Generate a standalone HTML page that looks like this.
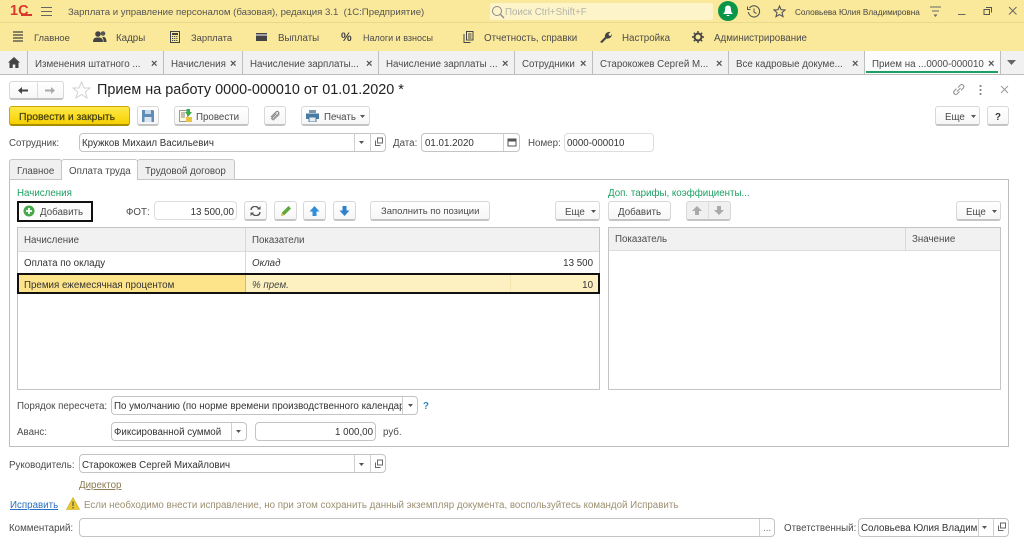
<!DOCTYPE html>
<html lang="ru"><head><meta charset="utf-8"><title>Прием на работу</title>
<style>
html,body{margin:0;padding:0;background:#fff}
#p{position:relative;width:1024px;height:545px;overflow:hidden;background:#fff;font:9.75px/14px "Liberation Sans",Arial,sans-serif;color:#4b4b4b;filter:blur(.3px)}
#p div,#p span,#p svg{position:absolute}
.t{white-space:nowrap;height:14px;margin-top:4px}
.b{box-sizing:border-box;background:linear-gradient(#fff,#f6f6f6);border:1px solid #d8d8d8;border-bottom:2px solid #c4c4c4;border-radius:3px}
.i{box-sizing:border-box;background:#fff;border:1px solid #c4c4c4;border-radius:4px}
.d{width:1px;background:#cfcfcf}
.x{font-size:11px;font-weight:bold;color:#555}
.g{color:#1c9f62}
</style></head><body><div id="p">

<!-- top bar -->
<div style="left:0;top:0;width:1024px;height:22px;background:#fbe99b"></div>
<div style="left:0;top:22px;width:1024px;height:1px;background:#e9d98c"></div>
<div style="left:0;top:23px;width:1024px;height:28px;background:#fbe99b"></div>
<span class="t" style="left:10px;top:-1px;font:bold 14.5px/16px 'Liberation Sans',sans-serif;color:#d9382c">1С</span>
<div style="left:21px;top:14px;width:11px;height:2px;background:#d9382c"></div>
<svg style="left:41px;top:6px" width="12" height="11"><path d="M0 1.5H11M0 5.5H11M0 9.5H11" stroke="#666" stroke-width="1"/></svg>
<span class="t" style="left:68px;top:2px;font-size:9.62px;color:#555">Зарплата и управление персоналом (базовая), редакция 3.1&nbsp; (1С:Предприятие)</span>
<div style="left:490px;top:3px;width:223px;height:17px;background:#fdf5c9;border-radius:2px"></div>
<svg style="left:491px;top:5px" width="14" height="14"><circle cx="6" cy="6" r="4.5" fill="none" stroke="#888" stroke-width="1"/><path d="M9.5 9.5L13 13" stroke="#888" stroke-width="1.3"/></svg>
<span class="t" style="left:505px;top:2px;color:#b3b3a8">Поиск Ctrl+Shift+F</span>
<div style="left:718px;top:1px;width:20px;height:20px;border-radius:50%;background:#0b9548"></div>
<svg style="left:722px;top:5px" width="12" height="12"><path d="M6 0.5C3.5 0.5 3 2.5 3 4.5C3 6.5 2.5 7.5 1 9H11C9.5 7.5 9 6.5 9 4.5C9 2.5 8.5 0.5 6 0.5ZM4.5 10H7.5C7.5 11.5 4.5 11.5 4.5 10Z" fill="#fff"/></svg>
<svg style="left:747px;top:5px" width="14" height="14"><path d="M2.5 3A5.6 5.6 0 1 1 1.4 7" fill="none" stroke="#555" stroke-width="1.1"/><path d="M0.5 1.5V4.5H3.5" fill="none" stroke="#555" stroke-width="1"/><path d="M7 3.5V7.2L9.5 8.5" fill="none" stroke="#555" stroke-width="1"/></svg>
<svg style="left:773px;top:5px" width="13" height="13"><path d="M6.5 1L8 4.7L12 5L9 7.6L10 11.6L6.5 9.5L3 11.6L4 7.6L1 5L5 4.7Z" fill="none" stroke="#555" stroke-width="1.1"/></svg>
<span class="t" style="left:795px;top:2px;font-size:8.2px;color:#444">Соловьева Юлия Владимировна</span>
<svg style="left:930px;top:6px" width="12" height="12"><path d="M0 1H11M2 5H9" stroke="#666"/><path d="M3.5 8.5H7.5L5.5 11Z" fill="#666"/></svg>
<svg style="left:957px;top:6px" width="10" height="10"><path d="M1 8.5H8.5" stroke="#666"/></svg>
<svg style="left:983px;top:6px" width="10" height="10"><path d="M3 1.5H8.5V6.5M1 3.5H6.5V8.5H1Z" fill="none" stroke="#555"/></svg>
<svg style="left:1008px;top:6px" width="10" height="10"><path d="M1 1L8.5 8.5M8.5 1L1 8.5" stroke="#666"/></svg>

<!-- menu -->
<svg style="left:13px;top:31px" width="11" height="12"><path d="M0 1H10M0 4H10M0 7H10M0 10H10" stroke="#444" stroke-width="1.2"/></svg>
<span class="t" style="left:34px;top:27px;font-size:9.4px">Главное</span>
<svg style="left:93px;top:30px" width="14" height="13"><circle cx="5" cy="4" r="2.8" fill="#444"/><circle cx="10" cy="3.5" r="2.3" fill="#555"/><path d="M0 12C0 8 2 7.5 5 7.5S10 8 10 12ZM10.500 12C10.500 9 10 8 9 7C12 6.500 13.500 8 13.500 12Z" fill="#444"/></svg>
<span class="t" style="left:116px;top:28px">Кадры</span>
<svg style="left:170px;top:31px" width="10" height="12"><path d="M.5.5H9.500V11.500H.5Z" fill="none" stroke="#444"/><path d="M2 2H8V4H2Z" fill="#444"/><path d="M2 5.500H8M2 7.500H8M2 9.500H8" stroke="#444" stroke-dasharray="1.200 .9"/></svg>
<span class="t" style="left:191px;top:27px;font-size:9.4px">Зарплата</span>
<svg style="left:256px;top:33px" width="12" height="9"><path d="M0 0H11V8H0Z" fill="#444"/><path d="M0 2H11" stroke="#ddd" stroke-width="1.200"/></svg>
<span class="t" style="left:278px;top:28px">Выплаты</span>
<span class="t" style="left:341px;top:26px;font-size:12px;font-weight:bold;color:#444">%</span>
<span class="t" style="left:363px;top:27px;font-size:9px">Налоги и взносы</span>
<svg style="left:463px;top:31px" width="11" height="12"><path d="M3.500 .5H10V9H3.500ZM1 3V11.500H7.500" fill="none" stroke="#444"/><path d="M5 3H8.500M5 5H8.500M5 7H8.500" stroke="#444"/></svg>
<span class="t" style="left:484px;top:28px">Отчетность, справки</span>
<svg style="left:599px;top:31px" width="13" height="12"><path d="M1 11L6 6C5.500 3 8 .5 11.500 1L9.500 3L10 4.500L11.500 5L13 3C13 6.500 10 8 7.500 7.500L3 12Z" fill="#444"/></svg>
<span class="t" style="left:622px;top:28px">Настройка</span>
<svg style="left:692px;top:31px" width="12" height="12"><circle cx="6" cy="6" r="3.500" fill="none" stroke="#444" stroke-width="2"/><path d="M6 0V12M0 6H12M1.800 1.800L10.200 10.200M10.200 1.800L1.800 10.200" stroke="#444" stroke-width="1.400" stroke-dasharray="2 8"/></svg>
<span class="t" style="left:714px;top:28px">Администрирование</span>

<!-- tabs -->
<div style="left:0;top:51px;width:1024px;height:23px;background:#f1f1f1"></div>
<div style="left:865px;top:51px;width:135px;height:23px;background:#fbfbfb"></div>
<div style="left:0;top:74px;width:1024px;height:1px;background:#bcbcbc"></div>
<svg style="left:8px;top:57px" width="12" height="11"><path d="M6 0L12 5.500H10.500V11H7.300V7.500H4.700V11H1.500V5.500H0Z" fill="#444"/></svg>
<div class="d" style="left:27px;top:51px;height:23px;background:#bdbdbd"></div>
<div class="d" style="left:163px;top:51px;height:23px;background:#bdbdbd"></div>
<div class="d" style="left:242px;top:51px;height:23px;background:#bdbdbd"></div>
<div class="d" style="left:378px;top:51px;height:23px;background:#bdbdbd"></div>
<div class="d" style="left:514px;top:51px;height:23px;background:#bdbdbd"></div>
<div class="d" style="left:592px;top:51px;height:23px;background:#bdbdbd"></div>
<div class="d" style="left:728px;top:51px;height:23px;background:#bdbdbd"></div>
<div class="d" style="left:864px;top:51px;height:23px;background:#bdbdbd"></div>
<div class="d" style="left:1000px;top:51px;height:23px;background:#bdbdbd"></div>
<span class="t" style="left:35px;top:54px">Изменения штатного ...</span><span class="t x" style="left:151px;top:53px">×</span>
<span class="t" style="left:171px;top:54px">Начисления</span><span class="t x" style="left:230px;top:53px">×</span>
<span class="t" style="left:250px;top:54px">Начисление зарплаты...</span><span class="t x" style="left:366px;top:53px">×</span>
<span class="t" style="left:386px;top:54px">Начисление зарплаты ...</span><span class="t x" style="left:502px;top:53px">×</span>
<span class="t" style="left:522px;top:54px">Сотрудники</span><span class="t x" style="left:580px;top:53px">×</span>
<span class="t" style="left:600px;top:54px">Старокожев Сергей М...</span><span class="t x" style="left:716px;top:53px">×</span>
<span class="t" style="left:736px;top:54px">Все кадровые докуме...</span><span class="t x" style="left:852px;top:53px">×</span>
<span class="t" style="left:872px;top:54px">Прием на ...0000-000010</span><span class="t x" style="left:988px;top:53px">×</span>
<div style="left:866px;top:71px;width:132px;height:2px;background:#1c9f62"></div>
<svg style="left:1007px;top:60px" width="10" height="6"><path d="M0 0H9L4.500 5Z" fill="#666"/></svg>

<!-- title row -->
<div class="b" style="left:9px;top:81px;width:55px;height:19px"></div>
<div class="d" style="left:37px;top:82px;height:16px;background:#ddd"></div>
<svg style="left:18px;top:86px" width="11" height="9"><path d="M0 4.500L4 1V3.500H10V5.500H4V8Z" fill="#444"/></svg>
<svg style="left:45px;top:86px" width="11" height="9"><path d="M10 4.500L6 1V3.500H0V5.500H6V8Z" fill="#aaa"/></svg>
<svg style="left:72px;top:81px" width="19" height="18"><path d="M9.500 1L12 7H18L13.300 11L15 17L9.500 13.500L4 17L5.700 11L1 7H7Z" fill="#fff" stroke="#d2d2d2"/></svg>
<span class="t" style="left:97px;top:77px;height:18px;font-size:14.4px;line-height:18px;color:#222">Прием на работу 0000-000010 от 01.01.2020 *</span>
<svg style="left:952px;top:83px" width="14" height="13"><path d="M6 4.500L8.500 2C10 .5 13 3 11.500 4.800L9 7.300M7.500 8.500L5 11C3.500 12.500 .5 10 2 8.200L4.500 5.700M5 8.500L8.500 5" fill="none" stroke="#999" stroke-width="1.100"/></svg>
<svg style="left:979px;top:84px" width="4" height="12"><path d="M1.500 1V3M1.500 5V7M1.500 9V11" stroke="#888" stroke-width="1.800"/></svg>
<svg style="left:1000px;top:85px" width="9" height="9"><path d="M1 1L8 8M8 1L1 8" stroke="#999"/></svg>

<!-- toolbar -->
<div style="box-sizing:border-box;left:9px;top:106px;width:121px;height:20px;border-radius:3px;border:1px solid #c9a900;border-bottom:2px solid #a98f00;background:linear-gradient(#ffe94a,#f6d000)"></div>
<span class="t" style="left:19px;top:107px;color:#44400f;font-size:10.4px;font-weight:normal;-webkit-text-stroke:.2px #44400f">Провести и закрыть</span>
<div class="b" style="left:137px;top:106px;width:22px;height:20px"></div>
<svg style="left:142px;top:110px" width="12" height="12"><path d="M0 0H11L12 1V12H0Z" fill="#5f8db8"/><path d="M3 0H9V4H3Z" fill="#c8d8e6"/><path d="M2.500 7H9.500V12H2.500Z" fill="#dde6ee"/></svg>
<div class="b" style="left:174px;top:106px;width:75px;height:20px"></div>
<svg style="left:179px;top:109px" width="14" height="14"><path d="M.5 1.500H8.500V12.500H.5Z" fill="#fdf8e3" stroke="#999"/><path d="M2 4H6M2 6H6M2 8H6" stroke="#888"/><path d="M7.500 0H11V3H13L9.500 7.500L6 3H7.500Z" fill="#3cab4b"/><path d="M7 8H13V13H7Z" fill="#e8c440"/></svg>
<span class="t" style="left:196px;top:107px">Провести</span>
<div class="b" style="left:264px;top:106px;width:22px;height:20px"></div>
<svg style="left:269px;top:110px" width="12" height="12"><path d="M2 7L7 2C8.500 .5 10.800 2.500 9.300 4.200L4.500 9C3.500 10 2.200 8.700 3.200 7.700L7.500 3.500" fill="none" stroke="#888" stroke-width="1.200"/><path d="M4 10.500L10.500 4.500" stroke="#aaa"/></svg>
<div class="b" style="left:301px;top:106px;width:69px;height:20px"></div>
<svg style="left:306px;top:110px" width="13" height="12"><path d="M3 0H10V3H3Z" fill="#7d97ad"/><path d="M0 3.500H13V9H0Z" fill="#4a7ba3"/><path d="M3 7H10V12H3Z" fill="#e6ecf1" stroke="#4a7ba3"/></svg>
<span class="t" style="left:324px;top:107px">Печать</span>
<svg style="left:360px;top:115px" width="6" height="3"><path d="M0 0H5L2.500 3Z" fill="#555"/></svg>
<div class="b" style="left:935px;top:106px;width:45px;height:20px"></div>
<span class="t" style="left:945px;top:107px">Еще</span>
<svg style="left:971px;top:115px" width="6" height="3"><path d="M0 0H5L2.500 3Z" fill="#555"/></svg>
<div class="b" style="left:987px;top:106px;width:22px;height:20px"></div>
<span class="t" style="left:995px;top:107px;color:#333;font-weight:bold">?</span>

<!-- employee row -->
<span class="t" style="left:9px;top:133px">Сотрудник:</span>
<div class="i" style="left:79px;top:133px;width:307px;height:19px"></div>
<div class="d" style="left:354px;top:134px;height:17px"></div><div class="d" style="left:370px;top:134px;height:17px"></div>
<svg style="left:359px;top:141px" width="6" height="3"><path d="M0 0H5L2.500 3Z" fill="#555"/></svg>
<svg style="left:374px;top:137px" width="10" height="10"><path d="M3.500 1H8.500V6H3.500ZM1.500 3.500V8.500H6.500" fill="none" stroke="#666"/></svg>
<span class="t" style="left:82px;top:133px;color:#333">Кружков Михаил Васильевич</span>
<span class="t" style="left:393px;top:133px">Дата:</span>
<div class="i" style="left:421px;top:133px;width:99px;height:19px"></div>
<div class="d" style="left:503px;top:134px;height:17px"></div>
<svg style="left:507px;top:137px" width="10" height="10"><path d="M1 2H9V9H1Z" fill="none" stroke="#555"/><path d="M1 3.500H9" stroke="#555" stroke-width="2"/></svg>
<span class="t" style="left:425px;top:133px;color:#333">01.01.2020</span>
<span class="t" style="left:528px;top:133px">Номер:</span>
<div class="i" style="left:564px;top:133px;width:90px;height:19px;border-color:#ddd"></div>
<span class="t" style="left:567px;top:133px;color:#333">0000-000010</span>

<!-- form tabs -->
<div style="box-sizing:border-box;left:9px;top:179px;width:1000px;height:268px;border:1px solid #bdbdbd"></div>
<div style="box-sizing:border-box;left:9px;top:159px;width:53px;height:21px;background:#f0f0f0;border:1px solid #c6c6c6;border-radius:3px 3px 0 0"></div>
<div style="box-sizing:border-box;left:137px;top:159px;width:98px;height:21px;background:#f0f0f0;border:1px solid #c6c6c6;border-radius:3px 3px 0 0"></div>
<div style="box-sizing:border-box;left:61px;top:159px;width:77px;height:21px;background:#fff;border:1px solid #c6c6c6;border-bottom:0;border-radius:3px 3px 0 0"></div>
<span class="t" style="left:17px;top:161px">Главное</span>
<span class="t" style="left:69px;top:161px">Оплата труда</span>
<span class="t" style="left:145px;top:161px">Трудовой договор</span>

<!-- section toolbar -->
<span class="t g" style="left:17px;top:183px">Начисления</span>
<span class="t g" style="left:608px;top:183px">Доп. тарифы, коэффициенты...</span>
<div style="box-sizing:border-box;left:17px;top:201px;width:76px;height:21px;border:2px solid #111;background:#fbfbfb"></div>
<svg style="left:23px;top:205px" width="12" height="12"><circle cx="6" cy="6" r="5.500" fill="#45a84a"/><path d="M6 3V9M3 6H9" stroke="#fff" stroke-width="1.800"/></svg>
<span class="t" style="left:40px;top:202px">Добавить</span>
<span class="t" style="left:126px;top:202px">ФОТ:</span>
<div class="i" style="left:154px;top:201px;width:83px;height:19px;border-color:#ddd"></div>
<span class="t" style="left:154px;top:202px;width:80px;text-align:right;color:#333">13 500,00</span>
<div class="b" style="left:244px;top:201px;width:23px;height:20px"></div>
<svg style="left:250px;top:206px" width="11" height="10"><path d="M1 4A4 4 0 0 1 8.500 2.500M10 6A4 4 0 0 1 2.500 7.500" fill="none" stroke="#555" stroke-width="1.400"/><path d="M7 3.500H10.500V0ZM4 6.500H.5V10Z" fill="#555"/></svg>
<div class="b" style="left:274px;top:201px;width:23px;height:20px"></div>
<svg style="left:280px;top:205px" width="12" height="12"><path d="M1 11L2 7.500L8.500 1L11 3.500L4.500 10Z" fill="#5fa83c"/><path d="M1 11L2 8L4 10Z" fill="#e2b84a"/></svg>
<div class="b" style="left:303px;top:201px;width:23px;height:20px"></div>
<svg style="left:309px;top:205px" width="11" height="12"><path d="M5.500 1L10.500 6.500H7.500V11H3.500V6.500H.5Z" fill="#2f8fd8"/></svg>
<div class="b" style="left:333px;top:201px;width:23px;height:20px"></div>
<svg style="left:339px;top:205px" width="11" height="12"><path d="M5.500 11L10.500 5.500H7.500V1H3.500V5.500H.5Z" fill="#2f7fcc"/></svg>
<div class="b" style="left:370px;top:201px;width:120px;height:20px"></div>
<span class="t" style="left:381px;top:201px;font-size:9.5px">Заполнить по позиции</span>
<div class="b" style="left:555px;top:201px;width:45px;height:20px"></div>
<span class="t" style="left:565px;top:202px">Еще</span>
<svg style="left:591px;top:210px" width="6" height="3"><path d="M0 0H5L2.500 3Z" fill="#555"/></svg>
<div class="b" style="left:608px;top:201px;width:63px;height:20px"></div>
<span class="t" style="left:618px;top:202px">Добавить</span>
<div class="b" style="left:686px;top:201px;width:45px;height:20px;background:#f0f0f0"></div>
<div class="d" style="left:708px;top:202px;height:17px;background:#ddd"></div>
<svg style="left:692px;top:205px" width="11" height="11"><path d="M5 1L10 6H7V10H3V6H0Z" fill="#aaa"/></svg>
<svg style="left:714px;top:205px" width="11" height="11"><path d="M5 10L10 5H7V1H3V5H0Z" fill="#aaa"/></svg>
<div class="b" style="left:956px;top:201px;width:45px;height:20px"></div>
<span class="t" style="left:966px;top:202px">Еще</span>
<svg style="left:992px;top:210px" width="6" height="3"><path d="M0 0H5L2.500 3Z" fill="#555"/></svg>

<!-- left table -->
<div style="box-sizing:border-box;left:17px;top:227px;width:583px;height:163px;border:1px solid #c4c4c4"></div>
<div style="left:18px;top:228px;width:581px;height:23px;background:#f1f1f1;border-bottom:1px solid #dcdcdc"></div>
<div class="d" style="left:245px;top:228px;height:45px;background:#d8d8d8"></div>
<span class="t" style="left:24px;top:230px">Начисление</span>
<span class="t" style="left:252px;top:230px">Показатели</span>
<span class="t" style="left:24px;top:253px;color:#333">Оплата по окладу</span>
<span class="t" style="left:252px;top:253px;font-style:italic;color:#333">Оклад</span>
<span class="t" style="left:500px;top:253px;width:93px;text-align:right;color:#333">13 500</span>
<div style="box-sizing:border-box;left:17px;top:273px;width:583px;height:21px;border:2px solid #111;background:#fdf1c2"></div>
<div style="left:19px;top:275px;width:226px;height:17px;background:#fde38a"></div>
<div style="left:245px;top:275px;width:1px;height:17px;background:#f2b930"></div>
<div style="left:510px;top:275px;width:1px;height:17px;background:#f4e6ae"></div>
<span class="t" style="left:24px;top:275px;color:#333">Премия ежемесячная процентом</span>
<span class="t" style="left:252px;top:275px;font-style:italic;color:#444">% прем.</span>
<span class="t" style="left:500px;top:275px;width:93px;text-align:right;color:#333">10</span>

<!-- right table -->
<div style="box-sizing:border-box;left:608px;top:227px;width:393px;height:163px;border:1px solid #c4c4c4"></div>
<div style="left:609px;top:228px;width:391px;height:22px;background:#f1f1f1;border-bottom:1px solid #dcdcdc"></div>
<div class="d" style="left:905px;top:228px;height:22px;background:#d8d8d8"></div>
<span class="t" style="left:615px;top:229px">Показатель</span>
<span class="t" style="left:912px;top:229px">Значение</span>

<!-- lower form -->
<span class="t" style="left:17px;top:396px">Порядок пересчета:</span>
<div class="i" style="left:111px;top:396px;width:307px;height:19px"></div>
<div class="d" style="left:402px;top:397px;height:17px"></div>
<svg style="left:408px;top:404px" width="6" height="3"><path d="M0 0H5L2.500 3Z" fill="#555"/></svg>
<span class="t" style="left:114px;top:396px;width:288px;overflow:hidden;color:#333">По умолчанию (по норме времени производственного календаря)</span>
<span class="t" style="left:423px;top:396px;color:#2f87c8;font-weight:bold">?</span>
<span class="t" style="left:17px;top:422px">Аванс:</span>
<div class="i" style="left:111px;top:422px;width:136px;height:19px"></div>
<div class="d" style="left:231px;top:423px;height:17px"></div>
<svg style="left:236px;top:430px" width="6" height="3"><path d="M0 0H5L2.500 3Z" fill="#555"/></svg>
<span class="t" style="left:114px;top:422px;color:#333">Фиксированной суммой</span>
<div class="i" style="left:255px;top:422px;width:121px;height:19px"></div>
<span class="t" style="left:255px;top:422px;width:118px;text-align:right;color:#333">1 000,00</span>
<span class="t" style="left:383px;top:422px">руб.</span>

<span class="t" style="left:9px;top:455px">Руководитель:</span>
<div class="i" style="left:79px;top:454px;width:307px;height:19px"></div>
<div class="d" style="left:354px;top:455px;height:17px"></div><div class="d" style="left:370px;top:455px;height:17px"></div>
<svg style="left:359px;top:463px" width="6" height="3"><path d="M0 0H5L2.500 3Z" fill="#555"/></svg>
<svg style="left:374px;top:459px" width="10" height="10"><path d="M3.500 1H8.500V6H3.500ZM1.500 3.500V8.500H6.500" fill="none" stroke="#666"/></svg>
<span class="t" style="left:82px;top:455px;color:#333">Старокожев Сергей Михайлович</span>
<span class="t" style="left:79px;top:475px;color:#8d7c55;text-decoration:underline">Директор</span>
<span class="t" style="left:10px;top:495px;color:#2a6fc0;text-decoration:underline">Исправить</span>
<svg style="left:66px;top:497px" width="14" height="13"><path d="M7 .5L13.500 12.500H.5Z" fill="#e9c92f" stroke="#c9a91c" stroke-width=".6"/><path d="M7 4.500V9M7 10V11.500" stroke="#555" stroke-width="1.200"/></svg>
<span class="t" style="left:84px;top:495px;color:#9b9070">Если необходимо внести исправление, но при этом сохранить данный экземпляр документа, воспользуйтесь командой Исправить</span>

<span class="t" style="left:9px;top:518px">Комментарий:</span>
<div class="i" style="left:79px;top:518px;width:696px;height:19px"></div>
<div class="d" style="left:759px;top:519px;height:17px"></div>
<span class="t" style="left:763px;top:518px;color:#777">...</span>
<span class="t" style="left:784px;top:518px">Ответственный:</span>
<div class="i" style="left:858px;top:518px;width:151px;height:19px"></div>
<div class="d" style="left:978px;top:519px;height:17px"></div><div class="d" style="left:993px;top:519px;height:17px"></div>
<svg style="left:982px;top:526px" width="6" height="3"><path d="M0 0H5L2.500 3Z" fill="#555"/></svg>
<svg style="left:997px;top:522px" width="10" height="10"><path d="M3.500 1H8.500V6H3.500ZM1.500 3.500V8.500H6.500" fill="none" stroke="#666"/></svg>
<span class="t" style="left:861px;top:518px;width:117px;overflow:hidden;color:#333">Соловьева Юлия Владимировна</span>
</div></body></html>
